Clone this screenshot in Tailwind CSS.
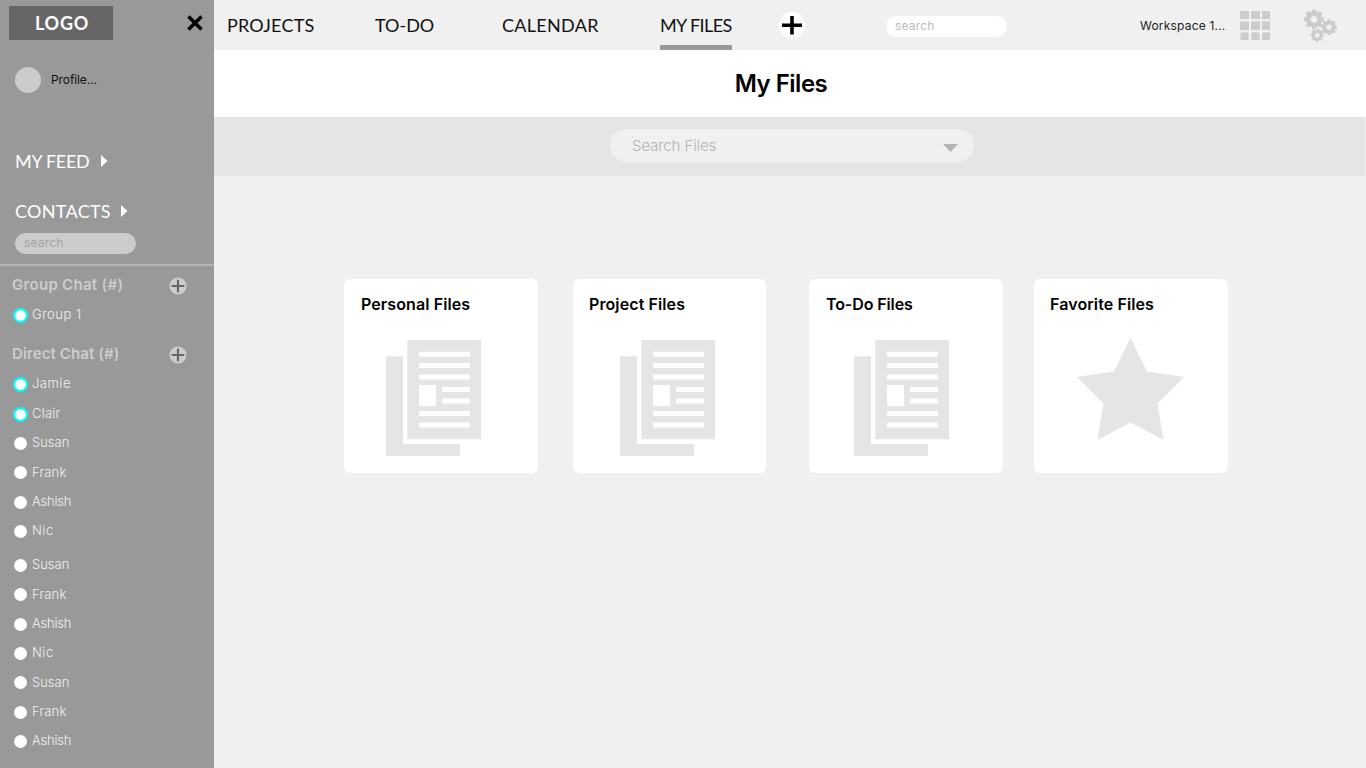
<!DOCTYPE html>
<html lang="en">
<head>
<meta charset="utf-8">
<title>My Files</title>
<script src="https://cdn.jsdelivr.net/npm/@tailwindcss/browser@4"></script>
</head>
<body class="w-[1366px] h-[768px] overflow-hidden flex bg-[#f0f0f0] font-['Inter',sans-serif] whitespace-nowrap text-black">
<svg class="hidden">
  <symbol id="doc" viewBox="0 0 95 116"><path fill="#e5e5e5" d="M0 16.3H17V104H74V116H0ZM21.300 0H95V99.300H21.300Z"/><path fill="#fff" d="M33 11.700h51v5H33zM33 23h51v5H33zM33 34.500h51v5H33zM33 45h17v21H33zM56 47h28v5H56zM56 58.500h28v5H56zM33 71h51v5H33zM33 82.500h51v5H33z"/></symbol>
  <symbol id="gear" viewBox="-10 -10 20 20"><circle r="5.900" fill="none" stroke="#ccc" stroke-width="4.800"/><circle r="8.600" fill="none" stroke="#ccc" stroke-width="2.600" pathLength="16" stroke-dasharray="1.100 0.900" stroke-dashoffset="0.550"/></symbol>
  <symbol id="add" viewBox="0 0 18 18"><circle cx="9" cy="9" r="8.600" fill="#ccc"/><path d="M9 2.700V15.300M2.700 9H15.300" stroke="#666" stroke-width="2.200"/></symbol>
  <symbol id="online" viewBox="0 0 15 15"><circle cx="7.500" cy="7.500" r="7.400" fill="#0ff"/><circle cx="7.500" cy="7.500" r="5.300" fill="#fff"/></symbol>
</svg>

<aside class="w-[214px] shrink-0 h-full bg-[#999] flex flex-col text-white">
  <div class="flex justify-between pt-1.5 pl-[9px] pr-[11px]">
    <div class="w-[104px] h-[34px] bg-[#666] flex items-center justify-center pl-[2px] font-['Lato'] font-bold text-[18px] tracking-[0.8px]">LOGO</div>
    <svg class="w-4 h-4 mt-[9px]" viewBox="0 0 16 16"><path d="M1.500 1.500L14.500 14.500M14.500 1.500L1.500 14.500" stroke="#000" stroke-width="3.600"/></svg>
  </div>
  <div class="flex items-center mt-[27px] pl-[15px] gap-[10px] h-[26px]">
    <div class="size-[26px] rounded-full bg-[#ccc]"></div>
    <span class="text-[12px] text-[#111] tracking-[-0.1px]">Profile...</span>
  </div>
  <div class="flex items-center h-5 mt-[58px] pl-[15px] gap-[12px] font-['Lato'] text-[18px] tracking-[-0.3px]"><span>MY FEED</span><svg class="w-[7px] h-3" viewBox="0 0 7 12"><path d="M0 0L6.500 6L0 12Z" fill="#fff"/></svg></div>
  <div class="flex items-center h-5 mt-[30px] pl-[15px] gap-[10px] font-['Lato'] text-[18px] tracking-[0.3px]"><span>CONTACTS</span><svg class="w-[7px] h-3" viewBox="0 0 7 12"><path d="M0 0L6.500 6L0 12Z" fill="#fff"/></svg></div>
  <div class="ml-[15px] mt-[12px] w-[121px] h-[21px] rounded-full bg-[#ccc] text-[#a3a3a3] text-[12px] leading-[19px] pl-[9px] tracking-[0.2px]">search</div>
  <div class="h-[2px] mt-[10px] bg-[#b3b3b3]"></div>

  <div class="flex items-center justify-between h-5 mt-[9px] pl-[12px] pr-[27px] text-[#ccc] text-[15px] font-semibold tracking-[0.3px]"><span>Group Chat (#)</span><svg class="size-[18px] shrink-0 mt-px"><use href="#add"/></svg></div>
  <div class="flex items-center h-5 mt-[10px] pl-[13px] gap-[4px] text-[13px] tracking-[0.5px] text-[#f0f0f0] font-light"><svg class="size-[15px]"><use href="#online"/></svg><span class="-mt-px">Group 1</span></div>
  <div class="flex items-center justify-between h-5 mt-[19px] pl-[12px] pr-[27px] text-[#ccc] text-[15px] font-semibold tracking-[0.1px]"><span>Direct Chat (#)</span><svg class="size-[18px] shrink-0 mt-px"><use href="#add"/></svg></div>

  <ul class="mt-[6px] text-[13px] text-[#f0f0f0] font-light">
    <li class="flex items-center h-[29.4px] pl-[13px] gap-[4px] tracking-[0.5px]"><svg class="size-[15px]"><use href="#online"/></svg><span class="-mt-px">Jamie</span></li>
    <li class="flex items-center h-[29.4px] pl-[13px] gap-[4px] tracking-[0.2px]"><svg class="size-[15px]"><use href="#online"/></svg><span class="-mt-px">Clair</span></li>
    <li class="flex items-center h-[29.4px] pl-[14px] gap-[5px]"><i class="size-[13px] rounded-full bg-white"></i><span class="-mt-px">Susan</span></li>
    <li class="flex items-center h-[29.4px] pl-[14px] gap-[5px] tracking-[0.2px]"><i class="size-[13px] rounded-full bg-white"></i><span class="-mt-px">Frank</span></li>
    <li class="flex items-center h-[29.4px] pl-[14px] gap-[5px] tracking-[-0.2px]"><i class="size-[13px] rounded-full bg-white"></i><span class="-mt-px">Ashish</span></li>
    <li class="flex items-center h-[29.4px] pl-[14px] gap-[5px] tracking-[0.5px]"><i class="size-[13px] rounded-full bg-white"></i><span class="-mt-px">Nic</span></li>
    <li class="flex items-center h-[29.3px] mt-[4.600px] pl-[14px] gap-[5px]"><i class="size-[13px] rounded-full bg-white"></i><span class="-mt-px">Susan</span></li>
    <li class="flex items-center h-[29.3px] pl-[14px] gap-[5px] tracking-[0.2px]"><i class="size-[13px] rounded-full bg-white"></i><span class="-mt-px">Frank</span></li>
    <li class="flex items-center h-[29.3px] pl-[14px] gap-[5px] tracking-[-0.2px]"><i class="size-[13px] rounded-full bg-white"></i><span class="-mt-px">Ashish</span></li>
    <li class="flex items-center h-[29.3px] pl-[14px] gap-[5px] tracking-[0.5px]"><i class="size-[13px] rounded-full bg-white"></i><span class="-mt-px">Nic</span></li>
    <li class="flex items-center h-[29.3px] pl-[14px] gap-[5px]"><i class="size-[13px] rounded-full bg-white"></i><span class="-mt-px">Susan</span></li>
    <li class="flex items-center h-[29.3px] pl-[14px] gap-[5px] tracking-[0.2px]"><i class="size-[13px] rounded-full bg-white"></i><span class="-mt-px">Frank</span></li>
    <li class="flex items-center h-[29.3px] pl-[14px] gap-[5px] tracking-[-0.2px]"><i class="size-[13px] rounded-full bg-white"></i><span class="-mt-px">Ashish</span></li>
  </ul>
</aside>

<main class="flex-1 min-w-0 flex flex-col">
  <header class="h-[50px] flex items-center pl-[13px]">
    <nav class="flex h-full font-['Lato'] text-[18px] leading-[51px] text-[#111]">
      <a class="w-[148px] tracking-[0.2px]">PROJECTS</a>
      <a class="w-[127px]">TO-DO</a>
      <a class="w-[158px] tracking-[0.3px]">CALENDAR</a>
      <a class="w-[72px] tracking-[-0.6px] border-b-[5px] border-[#999]">MY FILES</a>
    </nav>
    <svg class="ml-[47px] size-[26px] shrink-0" viewBox="0 0 26 26"><circle cx="13" cy="13" r="13" fill="#fff"/><path d="M13 4V22.500M3 13.200H23" stroke="#000" stroke-width="3.600"/></svg>
    <div class="ml-[81px] mt-[3px] w-[121px] h-[21px] rounded-full bg-white text-[#bbb] text-[12px] leading-[20px] pl-[9px] tracking-[0.2px]">search</div>
    <span class="ml-[133px] w-[100px] mt-[2px] text-[12px] tracking-[0.2px] text-[#222]">Workspace 1...</span>
    <svg class="w-[30px] h-[30px] shrink-0 mt-[1px]" viewBox="0 0 30 30"><path fill="#ccc" d="M0 0h9v8H0zM11 0h9v8h-9zM22 0h8v8h-8zM0 10.500h9v8.500H0zM11 10.500h9v8.500h-9zM22 10.500h8v8.500h-8zM.5 21.500h8V29h-8zM11.500 21.500h8V29h-8zM22 21.500h8V29h-8z"/></svg>
    <svg class="ml-[34px] w-[33px] h-[33px] shrink-0" viewBox="1304 8.500 33 33"><use href="#gear" x="1304" y="8.700" width="20" height="20"/><use href="#gear" x="1321" y="18.700" width="16" height="16"/><use href="#gear" x="1310.500" y="28" width="13.500" height="13.500"/></svg>
  </header>
  <section class="h-[67px] bg-white flex items-center justify-center"><h1 class="ml-[-18px] text-[24px] font-semibold tracking-[-0.5px]">My Files</h1></section>
  <section class="h-[59px] bg-[#e5e5e5] mr-px flex items-center pl-[396px]">
    <div class="w-[364px] h-[33px] -mt-[2px] rounded-full bg-[#f0f0f0] flex items-center justify-between pl-[22px] pr-[16px] text-[15px] tracking-[-0.1px] text-[#b3b3b3] font-light"><span class="mt-[2px]">Search Files</span><svg class="w-[15px] h-2 mt-[5px]" viewBox="0 0 15 8"><path d="M0 0H15L7.500 8Z" fill="#b3b3b3"/></svg></div>
  </section>
  <section class="flex mt-[103px] pl-[130px] text-[16px] font-semibold">
    <article class="w-[194px] h-[194px] rounded-md bg-white"><h2 class="pl-[17px] pt-[13px] leading-6 tracking-[0.1px]">Personal Files</h2><svg class="ml-[42px] mt-[24px] w-[95px] h-[116px]"><use href="#doc"/></svg></article>
    <article class="ml-[35px] w-[193px] h-[194px] rounded-md bg-white"><h2 class="pl-[16px] pt-[13px] leading-6 tracking-[0.1px]">Project Files</h2><svg class="ml-[47px] mt-[24px] w-[95px] h-[116px]"><use href="#doc"/></svg></article>
    <article class="ml-[43px] w-[194px] h-[194px] rounded-md bg-white"><h2 class="pl-[17px] pt-[13px] leading-6 tracking-[-0.1px]">To-Do Files</h2><svg class="ml-[45px] mt-[24px] w-[95px] h-[116px]"><use href="#doc"/></svg></article>
    <article class="ml-[31px] w-[194px] h-[194px] rounded-md bg-white"><h2 class="pl-[16px] pt-[13px] leading-6 tracking-[0.1px]">Favorite Files</h2><svg class="ml-[43px] mt-[22px] w-[107px] h-[102px]" viewBox="0 0 107 102"><path fill="#e5e5e5" d="M53.500 0L70 33.500L107 39L80.500 65.500L86.500 102L53.500 84.500L20.500 102L26.500 65.500L0 39L37 33.500Z"/></svg></article>
  </section>
</main>
</body>
</html>
